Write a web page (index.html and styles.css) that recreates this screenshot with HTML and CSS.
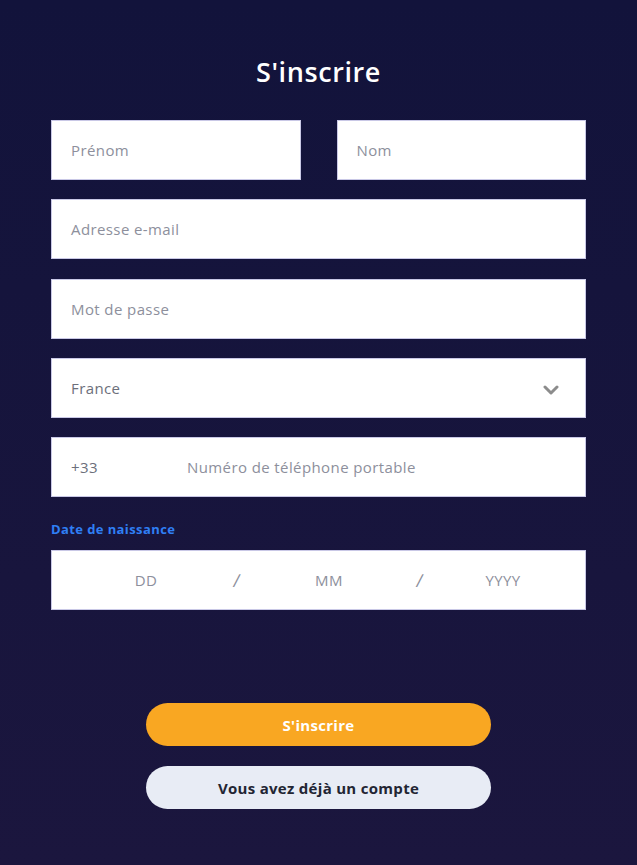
FILE: index.html
```html
<!DOCTYPE html>
<html lang="fr">
<head>
<meta charset="utf-8">
<title>S'inscrire</title>
<link rel="stylesheet" href="styles.css">
</head>
<body>
<main class="page">
  <h1 class="title">S'inscrire</h1>
  <form class="form">
    <div class="row two">
      <div class="field"><span class="ph">Prénom</span></div>
      <div class="field"><span class="ph">Nom</span></div>
    </div>
    <div class="field"><span class="ph">Adresse e-mail</span></div>
    <div class="field"><span class="ph">Mot de passe</span></div>
    <div class="field select">
      <span class="val">France</span>
      <svg class="chev" width="16" height="10" viewBox="0 0 16 10"><path d="M2 2 L8 8 L14 2" fill="none" stroke="#8c8c8c" stroke-width="3" stroke-linecap="round" stroke-linejoin="round"/></svg>
    </div>
    <div class="field phone">
      <span class="val code">+33</span>
      <span class="ph">Numéro de téléphone portable</span>
    </div>
    <div class="label">Date de naissance</div>
    <div class="field date">
      <span class="dpart d1">DD</span>
      <span class="slash s1">/</span>
      <span class="dpart d2">MM</span>
      <span class="slash s2">/</span>
      <span class="dpart d3">YYYY</span>
    </div>
  </form>
  <div class="actions">
    <button class="btn primary" type="button">S'inscrire</button>
    <button class="btn secondary" type="button">Vous avez déjà un compte</button>
  </div>
</main>
</body>
</html>
```
FILE: styles.css
```css
html, body {
  margin: 0;
  padding: 0;
}
body {
  background: linear-gradient(180deg, #12133b 0%, #1b163e 100%);
  min-height: 865px;
  font-family: "Open Sans", "Noto Sans", sans-serif;
}
.page {
  width: 535px;
  margin: 0 auto;
  padding: 52px 0 0 0;
  box-sizing: border-box;
}
.title {
  margin: 0 0 28px 0;
  text-align: center;
  color: #ffffff;
  font-size: 27px;
  font-weight: 600;
  line-height: 40px;
  letter-spacing: 0.6px;
}
.form {
  display: flex;
  flex-direction: column;
  gap: 19.25px;
}
.row.two {
  display: flex;
  gap: 36px;
}
.row.two .field {
  flex: 1;
}
.field {
  height: 60px;
  background: #ffffff;
  border: 1px solid #c9c8e6;
  box-sizing: border-box;
  display: flex;
  align-items: center;
  padding: 0 19px;
  font-size: 15px;
  letter-spacing: 0.4px;
}
.ph {
  color: #8d8f9c;
}
.val {
  color: #6c6f7b;
}
.select {
  justify-content: space-between;
}
.chev {
  margin-right: 7px;
  margin-top: 4px;
}
.phone .code {
  width: 116px;
}
.label {
  color: #2f7ff5;
  font-size: 13px;
  font-weight: 700;
  letter-spacing: 0.4px;
  margin: 4.75px 0 -6.25px 0;
  line-height: 16px;
}
.date {
  padding: 0;
  color: #8d8f9c;
}
.dpart, .slash {
  text-align: center;
}
.d1 { width: 140px; margin-left: 24px; }
.s1 { width: 42px; }
.d2 { width: 142px; }
.s2 { width: 40px; }
.d3 { width: 126px; }
.slash {
  font-size: 18px;
  transform: skewX(-8deg);
}
.actions {
  display: flex;
  flex-direction: column;
  align-items: center;
  gap: 20px;
  margin-top: 93px;
}
.btn {
  width: 345px;
  height: 43px;
  border: none;
  border-radius: 22px;
  font-family: "Open Sans", "Noto Sans", sans-serif;
  font-size: 15px;
  font-weight: 700;
  letter-spacing: 0.3px;
  cursor: pointer;
}
.primary {
  background: #f9a722;
  color: #ffffff;
}
.secondary {
  background: #e8ecf5;
  color: #222533;
}
```
